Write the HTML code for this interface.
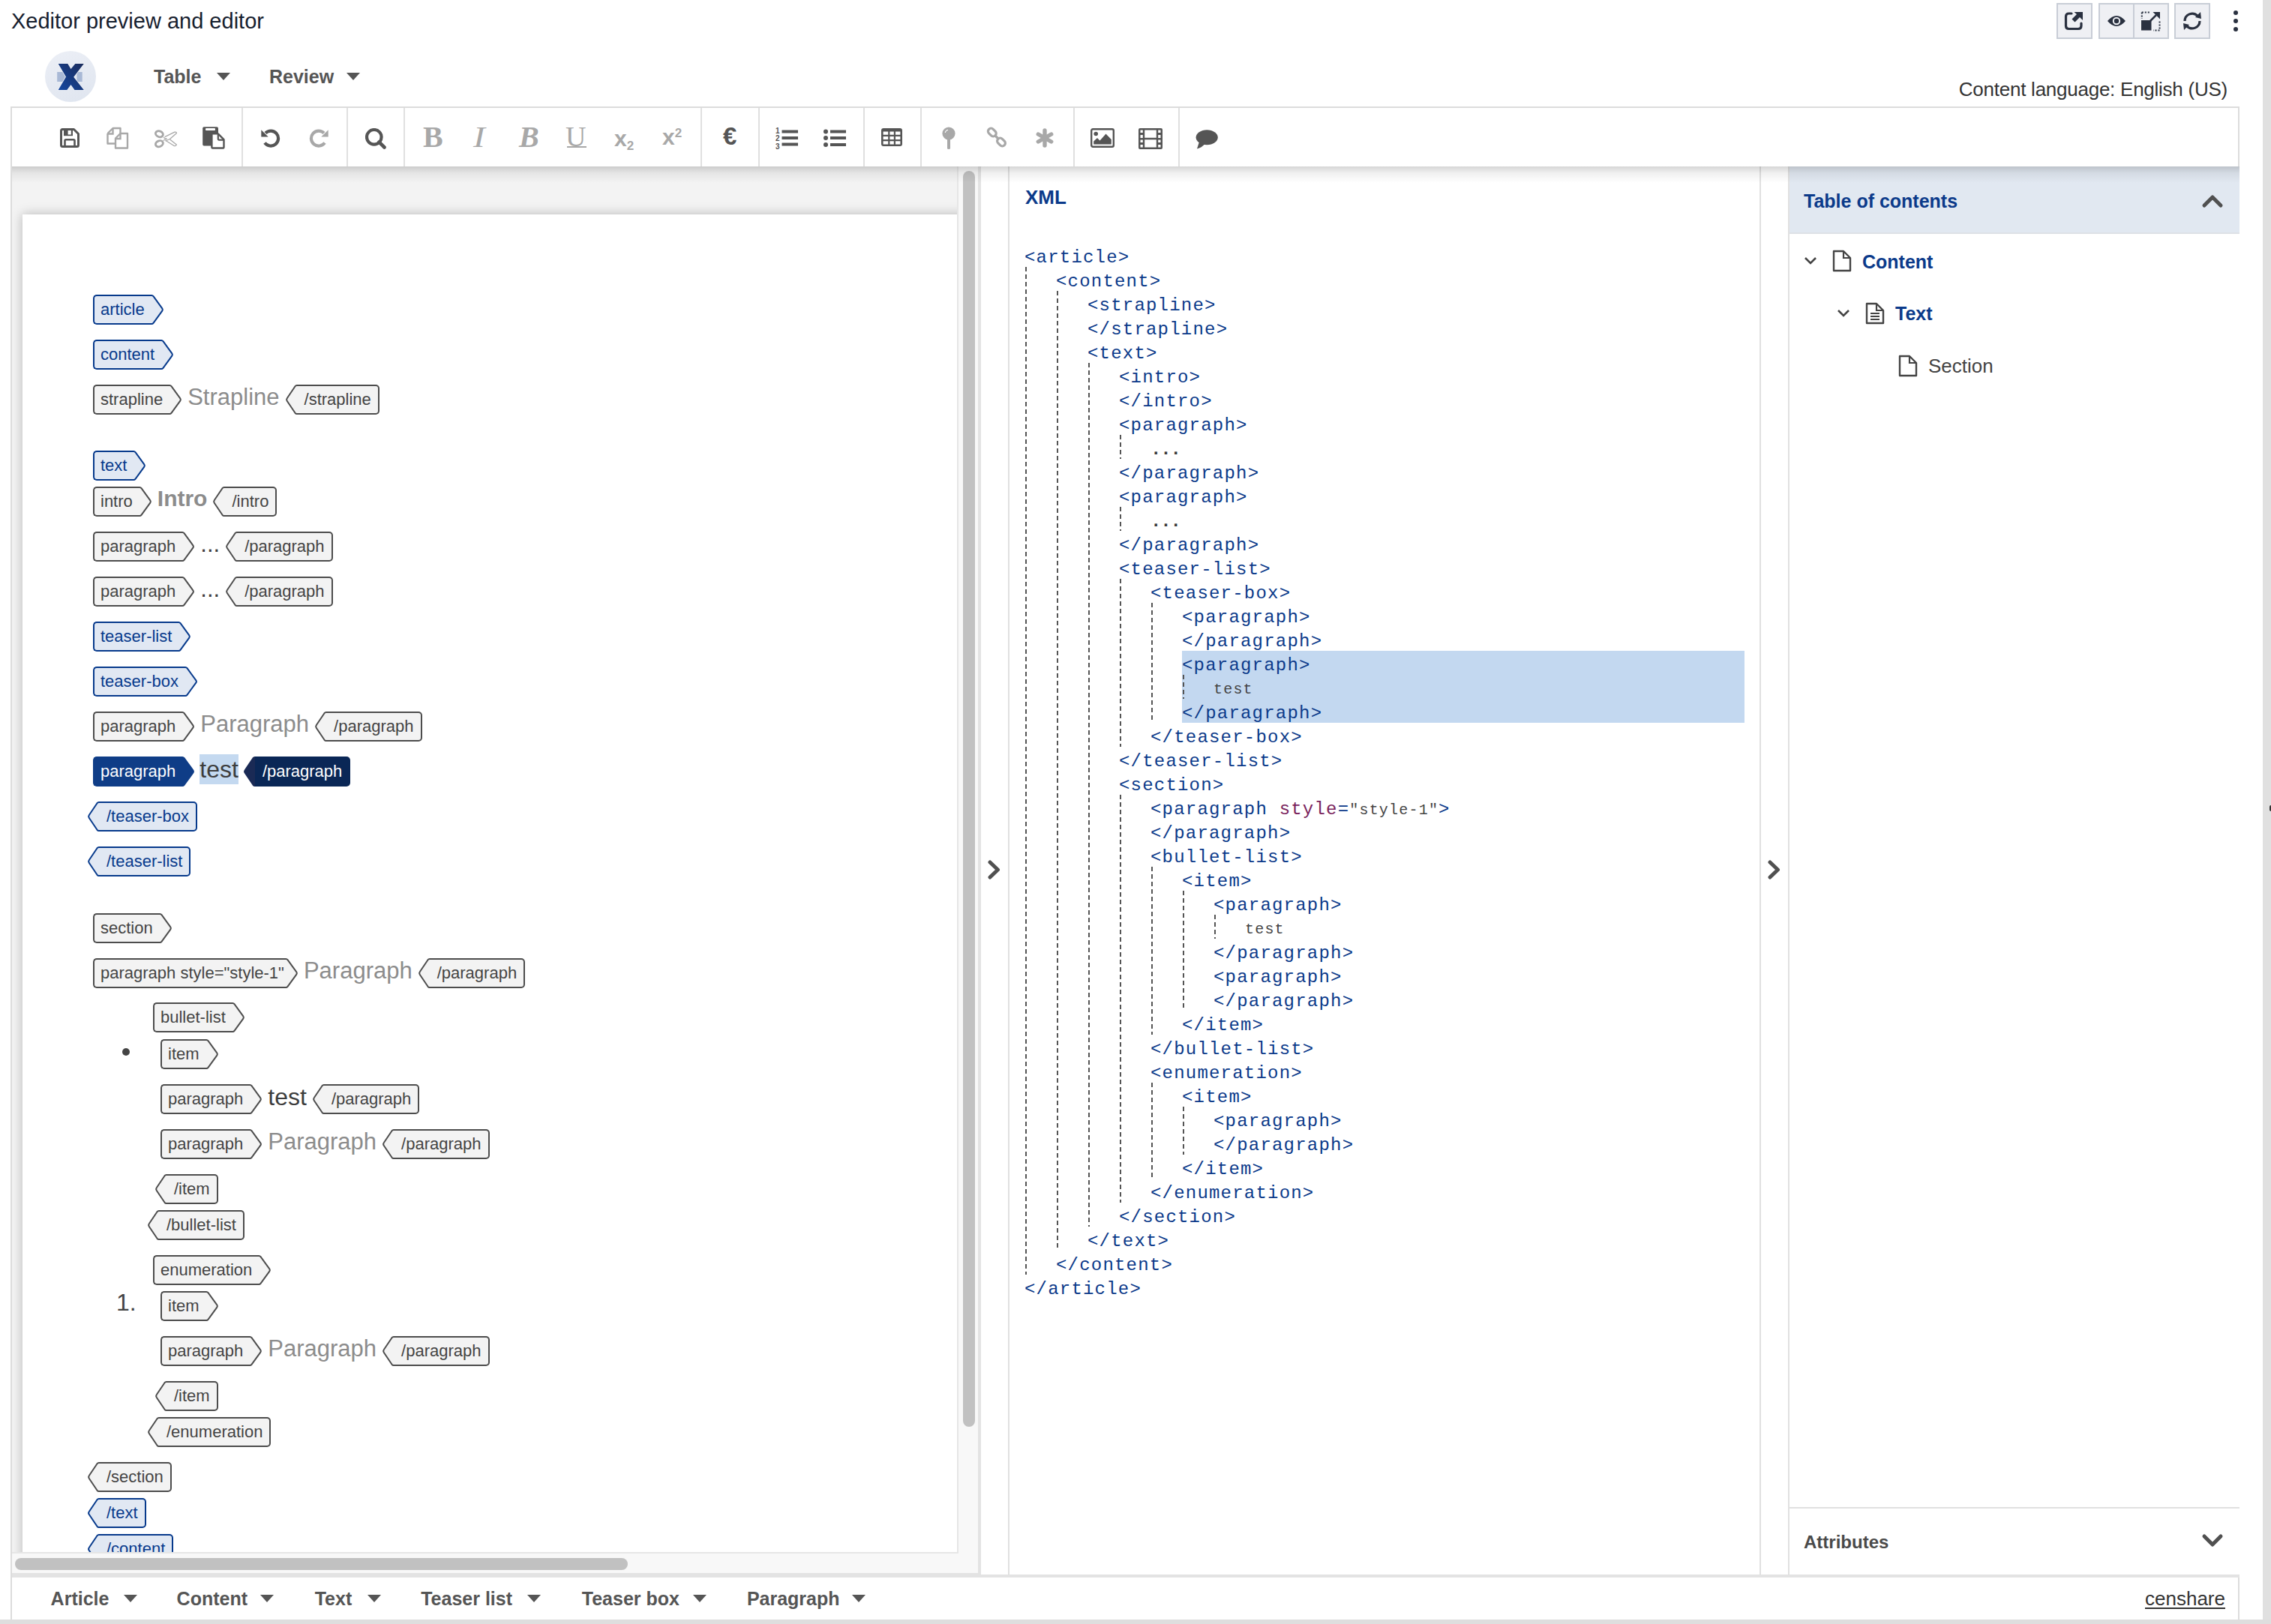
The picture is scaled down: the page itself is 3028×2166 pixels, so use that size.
<!DOCTYPE html><html><head><meta charset="utf-8"><style>
*{margin:0;padding:0;box-sizing:border-box}
html,body{width:3028px;height:2166px;overflow:hidden;background:#fff;font-family:"Liberation Sans",sans-serif}
.a{position:absolute}
.row{position:absolute;display:flex;align-items:flex-start;height:40px;white-space:nowrap}
.t{display:flex;height:40px;flex:none}
.t .r{height:40px;border:2px solid;font-size:22px;line-height:36px;}
.t.o .r{border-right:none;border-radius:5px 0 0 5px;padding:0 9px 0 8px}
.t.c .r{border-left:none;border-radius:0 5px 5px 0;padding:0 9px 0 10px}
.t svg{display:block;width:16px;height:40px;overflow:visible;flex:none}
.t.c svg{width:15px}
.g .r{border-color:#4d4d4d;background:#f3f3f3;color:#444}
.t svg .f{stroke:none}.t svg .k{fill:none!important;stroke-width:2;stroke-linejoin:round}
.g svg .f{fill:#f3f3f3}.g svg .k{stroke:#4d4d4d}
.b .r{border-color:#073a8c;background:#e1e8f3;color:#073a8c}
.b svg .f{fill:#e1e8f3}.b svg .k{stroke:#073a8c}
.s .r{border-color:#0f3d87;background:#0f3d87;color:#fff}
.s svg .f{fill:#0f3d87}.s svg .k{stroke:#0f3d87}
.sc .r{border-color:#0a2756;background:#0a2756;color:#fff}
.sc svg .f{fill:#1a2a55}.sc svg .k{stroke:#1a2a55}
.ct{font-size:31px;line-height:40px;color:#8c8c8c;margin:0 8px;position:relative;top:-3px}
.dk{color:#3d3d3d}
.xl{position:absolute;font-family:"Liberation Mono",monospace;font-size:24px;letter-spacing:1.2px;line-height:32px;color:#0b3a8a;white-space:pre}
.xt{font-size:20px;letter-spacing:1.2px;color:#444}
.dl{position:absolute;width:2px;background:repeating-linear-gradient(to bottom,#555 0 6px,transparent 6px 10px)}
</style></head><body>
<div class="a" style="left:15px;top:10px;font-size:29px;color:#16202e;line-height:36px">Xeditor preview and editor</div>
<div class="a" style="left:60px;top:68px;width:68px;height:68px;border-radius:50%;background:linear-gradient(160deg,#eceff6,#dfe5ef)"></div>
<svg class="a" style="left:74px;top:84px" width="40" height="38" viewBox="0 0 40 38">
<defs><linearGradient id="lg" x1="0" y1="1" x2="1" y2="0"><stop offset="0" stop-color="#1547a0"/><stop offset="1" stop-color="#1b2c5c"/></linearGradient></defs>
<path d="M2.2 12H14V25H2.2Z" fill="#a9b9d6"/><path d="M28.4 12H35.7V25H28.4Z" fill="#a9b9d6"/>
<path d="M3.7 1H16.3L20.5 8L26.3 1H37.8L24.2 18.7L37.8 36H25.5L20.5 29L15.3 36H3.7L14 18.5Z" fill="url(#lg)" stroke="#eef1f7" stroke-width="1.6" paint-order="stroke"/>
</svg>
<div class="a" style="left:205px;top:84px;font-size:25px;font-weight:bold;color:#555;line-height:36px">Table</div>
<svg class="a" style="left:289px;top:97px" width="18" height="10" viewBox="0 0 18 10"><path d="M0 0H18L9 10Z" fill="#555"/></svg>
<div class="a" style="left:359px;top:84px;font-size:25px;font-weight:bold;color:#555;line-height:36px">Review</div>
<svg class="a" style="left:462px;top:97px" width="18" height="10" viewBox="0 0 18 10"><path d="M0 0H18L9 10Z" fill="#555"/></svg>
<div class="a" style="right:58px;top:101px;font-size:26px;color:#333;line-height:36px;letter-spacing:-0.25px">Content language: English (US)</div>
<div class="a" style="left:2742px;top:4px;width:48px;height:48px;background:#eff0f4;border:2px solid #c8cdd6"></div>
<div class="a" style="left:2798px;top:4px;width:48px;height:48px;background:#eff0f4;border:2px solid #c8cdd6"></div>
<div class="a" style="left:2844px;top:4px;width:48px;height:48px;background:#eff0f4;border:2px solid #c8cdd6"></div>
<div class="a" style="left:2899px;top:4px;width:48px;height:48px;background:#eff0f4;border:2px solid #c8cdd6"></div>
<svg class="a" style="left:2752px;top:14px" width="28" height="28" viewBox="0 0 28 28">
<path d="M10 4H6.5Q2.5 4 2.5 8V20.5Q2.5 24.5 6.5 24.5H19Q23 24.5 23 20.5V17" fill="none" stroke="#2a3140" stroke-width="3.2" stroke-linecap="round"/>
<path d="M25 2V13L21 9L14.5 15.5L10.5 11.5L17 5L13.5 2Z" fill="#2a3140"/></svg>
<svg class="a" style="left:2808px;top:16px" width="28" height="24" viewBox="0 0 28 24">
<path d="M2 12Q14 -2 26 12Q14 26 2 12Z" fill="#2a3140"/><circle cx="14" cy="12" r="5.2" fill="#eff0f4"/><circle cx="14" cy="12" r="3.2" fill="#2a3140"/></svg>
<svg class="a" style="left:2854px;top:14px" width="28" height="28" viewBox="0 0 28 28">
<path d="M1 13H14.5V26.5H1Z" fill="#2a3140"/>
<path d="M1.8 2.6H13M1.8 2.6V11M25.5 14.5V26.5H17" fill="none" stroke="#2a3140" stroke-width="2" stroke-dasharray="2 2"/>
<path d="M13 14L21 6" stroke="#2a3140" stroke-width="2.5"/><path d="M16.5 2H26V11.5Z" fill="#2a3140"/></svg>
<svg class="a" style="left:2909px;top:14px" width="28" height="28" viewBox="0 0 28 28">
<path d="M4 14A10 10 0 0 1 21 7" fill="none" stroke="#2a3140" stroke-width="3.2"/><path d="M24 14A10 10 0 0 1 7 21" fill="none" stroke="#2a3140" stroke-width="3.2"/>
<path d="M18 9L25 2L26 11Z" fill="#2a3140"/><path d="M10 19L3 26L2 17Z" fill="#2a3140"/></svg>
<div class="a" style="left:2978px;top:14.3px;width:6px;height:6px;border-radius:50%;background:#2a3140"></div>
<div class="a" style="left:2978px;top:24.8px;width:6px;height:6px;border-radius:50%;background:#2a3140"></div>
<div class="a" style="left:2978px;top:35.5px;width:6px;height:6px;border-radius:50%;background:#2a3140"></div>
<div class="a" style="left:14px;top:142px;width:2972px;height:80px;border:2px solid #dcdcdc;border-bottom:none;background:#fff"></div>
<div class="a" style="left:14px;top:222px;width:2px;height:1940px;background:#dcdcdc"></div>
<div class="a" style="left:16px;top:222px;width:1260px;height:1848px;background:#f3f3f3;overflow:hidden"><div class="a" style="left:14px;top:64px;width:1400px;height:2000px;background:#fff;box-shadow:0 0 14px rgba(0,0,0,.25)"></div></div>
<div class="a" style="left:1276px;top:222px;width:28px;height:1850px;background:#f8f8f8;border-left:2px solid #e6e6e6"></div>
<div class="a" style="left:1276px;top:2072px;width:28px;height:26px;background:#f8f8f8"></div>
<div class="a" style="left:1284px;top:228px;width:16px;height:1675px;background:#c1c1c1;border-radius:8px"></div>
<div class="a" style="left:16px;top:2070px;width:1262px;height:28px;background:#f8f8f8;border-top:2px solid #e6e6e6"></div>
<div class="a" style="left:20px;top:2078px;width:817px;height:16px;background:#c1c1c1;border-radius:8px"></div>
<div class="a" style="left:1304px;top:222px;width:4px;height:1878px;background:#e3e3e3"></div>
<div class="a" style="left:16px;top:2098px;width:1292px;height:6px;background:#e3e3e3"></div>
<div class="a" style="left:1308px;top:2100px;width:1678px;height:4px;background:#e3e3e3"></div>
<div class="a" style="left:1344px;top:222px;width:2px;height:1878px;background:#e0e0e0"></div>
<div class="a" style="left:2346px;top:222px;width:2px;height:1878px;background:#e0e0e0"></div>
<div class="a" style="left:2384px;top:222px;width:2px;height:1878px;background:#e0e0e0"></div>
<svg class="a" style="left:1317px;top:1147px" width="17" height="26" viewBox="0 0 17 26"><path d="M3 3L13.5 13L3 23" fill="none" stroke="#505050" stroke-width="5" stroke-linejoin="round" stroke-linecap="round"/></svg>
<svg class="a" style="left:2357px;top:1147px" width="17" height="26" viewBox="0 0 17 26"><path d="M3 3L13.5 13L3 23" fill="none" stroke="#505050" stroke-width="5" stroke-linejoin="round" stroke-linecap="round"/></svg>
<div class="a" style="left:14px;top:2104px;width:2972px;height:58px;border:2px solid #dcdcdc;border-top:none;background:#fff"></div>
<div class="a" style="left:67.6px;top:2112px;font-size:25px;line-height:40px;font-weight:bold;color:#555">Article</div>
<svg class="a" style="left:164.7px;top:2127px" width="18" height="10" viewBox="0 0 18 10"><path d="M0 0H18L9 10Z" fill="#555"/></svg>
<div class="a" style="left:235.6px;top:2112px;font-size:25px;line-height:40px;font-weight:bold;color:#555">Content</div>
<svg class="a" style="left:347.4px;top:2127px" width="18" height="10" viewBox="0 0 18 10"><path d="M0 0H18L9 10Z" fill="#555"/></svg>
<div class="a" style="left:419.7px;top:2112px;font-size:25px;line-height:40px;font-weight:bold;color:#555">Text</div>
<svg class="a" style="left:490.3px;top:2127px" width="18" height="10" viewBox="0 0 18 10"><path d="M0 0H18L9 10Z" fill="#555"/></svg>
<div class="a" style="left:561.2px;top:2112px;font-size:25px;line-height:40px;font-weight:bold;color:#555">Teaser list</div>
<svg class="a" style="left:702.8px;top:2127px" width="18" height="10" viewBox="0 0 18 10"><path d="M0 0H18L9 10Z" fill="#555"/></svg>
<div class="a" style="left:775.8px;top:2112px;font-size:25px;line-height:40px;font-weight:bold;color:#555">Teaser box</div>
<svg class="a" style="left:923.7px;top:2127px" width="18" height="10" viewBox="0 0 18 10"><path d="M0 0H18L9 10Z" fill="#555"/></svg>
<div class="a" style="left:995.9px;top:2112px;font-size:25px;line-height:40px;font-weight:bold;color:#555">Paragraph</div>
<svg class="a" style="left:1135.7px;top:2127px" width="18" height="10" viewBox="0 0 18 10"><path d="M0 0H18L9 10Z" fill="#555"/></svg>
<div class="a" style="left:2860px;top:2112px;font-size:26px;line-height:40px;color:#333;text-decoration:underline;text-underline-offset:3px">censhare</div>
<div class="a" style="left:322px;top:144px;width:2px;height:78px;background:#e0e0e0"></div>
<div class="a" style="left:462px;top:144px;width:2px;height:78px;background:#e0e0e0"></div>
<div class="a" style="left:538px;top:144px;width:2px;height:78px;background:#e0e0e0"></div>
<div class="a" style="left:934px;top:144px;width:2px;height:78px;background:#e0e0e0"></div>
<div class="a" style="left:1011px;top:144px;width:2px;height:78px;background:#e0e0e0"></div>
<div class="a" style="left:1151px;top:144px;width:2px;height:78px;background:#e0e0e0"></div>
<div class="a" style="left:1227px;top:144px;width:2px;height:78px;background:#e0e0e0"></div>
<div class="a" style="left:1431px;top:144px;width:2px;height:78px;background:#e0e0e0"></div>
<div class="a" style="left:1571px;top:144px;width:2px;height:78px;background:#e0e0e0"></div>
<svg class="a" style="left:80px;top:171px" width="26" height="26" viewBox="0 0 26 26"><path d="M2.8 1.5H18.5L24.5 7.5V22.5Q24.5 24.5 22.5 24.5H3.5Q1.5 24.5 1.5 22.5V3.5Q1.5 1.5 3.5 1.5Z" fill="none" stroke="#555" stroke-width="3" stroke-linejoin="round"/>
<path d="M5 1.5H17V10.2H5Z" fill="#555"/><path d="M10.6 3H14.8V8.5H10.6Z" fill="#fff"/>
<path d="M6.5 24V16.5Q6.5 15.2 7.8 15.2H18.2Q19.5 15.2 19.5 16.5V24" fill="none" stroke="#555" stroke-width="2.6"/></svg>
<svg class="a" style="left:142px;top:169px" width="30" height="30" viewBox="0 0 30 30"><path d="M1.5 9L8.5 2H18.5V9" fill="none" stroke="#a8a8a8" stroke-width="2.4" stroke-linejoin="round"/>
<path d="M1.5 9V22.5H12" fill="none" stroke="#a8a8a8" stroke-width="2.4" stroke-linejoin="round"/>
<path d="M1.5 9.5H8.5V2" fill="none" stroke="#a8a8a8" stroke-width="2.4"/>
<path d="M12 15.5L18.5 9H28V28.5H12Z" fill="#fff" stroke="#a8a8a8" stroke-width="2.4" stroke-linejoin="round"/>
<path d="M12 16H18.5V9" fill="none" stroke="#a8a8a8" stroke-width="2.4"/></svg>
<svg class="a" style="left:206px;top:173px" width="30" height="25" viewBox="0 0 30 25"><ellipse cx="6.4" cy="5.7" rx="5.1" ry="3.9" transform="rotate(22 6.4 5.7)" fill="none" stroke="#a8a8a8" stroke-width="2.8"/>
<ellipse cx="6.4" cy="18.7" rx="5.1" ry="3.9" transform="rotate(-22 6.4 18.7)" fill="none" stroke="#a8a8a8" stroke-width="2.8"/>
<path d="M12 10.2L15 12.2L13.5 13.5L11.5 14.5" fill="none" stroke="#a8a8a8" stroke-width="1.3"/>
<path d="M13.6 9.6L26.8 3.2Q28.8 2.6 29.6 4.4L20.4 12.5L14.6 15" fill="none" stroke="#a8a8a8" stroke-width="1.3" stroke-linejoin="round"/>
<path d="M14.6 14.2L25.8 21.3Q28.2 22.2 29.4 20L20.6 12.9" fill="none" stroke="#a8a8a8" stroke-width="1.3" stroke-linejoin="round"/>
<circle cx="15.9" cy="12.2" r="1" fill="#a8a8a8"/></svg>
<svg class="a" style="left:270px;top:169px" width="30" height="30" viewBox="0 0 30 30"><path d="M2 0.2H19Q21 0.2 21 2.2V25.6H2Q0.2 25.6 0.2 23.6V2.2Q0.2 0.2 2 0.2Z" fill="#555"/>
<rect x="4" y="2" width="13" height="3" rx="1" fill="#fff"/>
<path d="M12.4 9.4H20.8L28.5 17.2V27.5Q28.5 28.5 27.5 28.5H13.4Q12.4 28.5 12.4 27.5Z" fill="#fff" stroke="#555" stroke-width="2.4" stroke-linejoin="round"/>
<path d="M20.8 9.6V16.6Q20.8 17.6 21.8 17.6H28.3" fill="none" stroke="#555" stroke-width="2.2"/></svg>
<svg class="a" style="left:348px;top:171px" width="26" height="26" viewBox="0 0 26 26"><g><path d="M5 19.5A10 10 0 1 0 6 6.5" fill="none" stroke="#555" stroke-width="4.2"/>
<path d="M0.3 2.2V11.5H9.7Z" fill="#555"/></g></svg>
<svg class="a" style="left:412px;top:171px" width="26" height="26" viewBox="0 0 26 26"><g transform="translate(26 0) scale(-1 1)"><path d="M5 19.5A10 10 0 1 0 6 6.5" fill="none" stroke="#a8a8a8" stroke-width="4.2"/>
<path d="M0.3 2.2V11.5H9.7Z" fill="#a8a8a8"/></g></svg>
<svg class="a" style="left:487px;top:171px" width="28" height="28" viewBox="0 0 28 28"><circle cx="11.8" cy="11.8" r="9.8" fill="none" stroke="#555" stroke-width="4.2"/>
<path d="M18.5 18.5L25.5 25.5" stroke="#555" stroke-width="4.6" stroke-linecap="round"/></svg>
<div class="a" style="left:564px;top:163px;font-family:'Liberation Serif',serif;font-size:40px;line-height:40px;color:#a8a8a8;font-weight:bold">B</div>
<div class="a" style="left:632px;top:162px;font-family:'Liberation Serif',serif;font-size:41px;line-height:41px;color:#a8a8a8;font-style:italic;transform:scaleX(1.15)">I</div>
<div class="a" style="left:692px;top:163px;font-family:'Liberation Serif',serif;font-size:40px;line-height:40px;color:#a8a8a8;font-weight:bold;font-style:italic">B</div>
<div class="a" style="left:754px;top:163px;font-family:'Liberation Serif',serif;font-size:38px;line-height:38px;color:#a8a8a8;">U</div>
<div class="a" style="left:756px;top:195px;width:26px;height:2.4px;background:#a8a8a8"></div>
<div class="a" style="left:819px;top:168px;font-family:'Liberation Sans';font-size:30px;line-height:34px;color:#a8a8a8;font-weight:bold">x<span style="font-size:17px;position:relative;top:5px">2</span></div>
<div class="a" style="left:883px;top:166px;font-family:'Liberation Sans';font-size:30px;line-height:34px;color:#a8a8a8;font-weight:bold">x<span style="font-size:17px;position:relative;top:-10px">2</span></div>
<div class="a" style="left:964px;top:164px;font-family:'Liberation Sans';font-size:33px;line-height:36px;color:#555;font-weight:bold">&#8364;</div>
<svg class="a" style="left:1034px;top:169px" width="30" height="31" viewBox="0 0 30 31"><path d="M8.5 4.5H30V8.5H8.5ZM8.5 13H30V17H8.5ZM8.5 21.5H30V25.5H8.5Z" fill="#555"/>
<text x="0" y="9" font-family="Liberation Sans" font-weight="bold" font-size="10" fill="#555">1</text>
<text x="0" y="19" font-family="Liberation Sans" font-weight="bold" font-size="10" fill="#555">2</text>
<text x="0" y="29.5" font-family="Liberation Sans" font-weight="bold" font-size="10" fill="#555">3</text></svg>
<svg class="a" style="left:1098px;top:171px" width="30" height="26" viewBox="0 0 30 26"><circle cx="3" cy="4.5" r="3" fill="#555"/><circle cx="3" cy="13" r="3" fill="#555"/><circle cx="3" cy="22" r="3" fill="#555"/>
<path d="M9 2.5H30V6.5H9ZM9 11H30V15H9ZM9 20H30V24H9Z" fill="#555"/></svg>
<svg class="a" style="left:1175px;top:171px" width="28" height="24" viewBox="0 0 28 24"><path d="M3 0H25Q28 0 28 3V21Q28 24 25 24H3Q0 24 0 21V3Q0 0 3 0ZM2.6 4.5V8.7H9.2V4.5ZM11.4 4.5V8.7H16.8V4.5ZM19 4.5V8.7H25.4V4.5ZM2.6 10.9V15.1H9.2V10.9ZM11.4 10.9V15.1H16.8V10.9ZM19 10.9V15.1H25.4V10.9ZM2.6 17.3V21.5H9.2V17.3ZM11.4 17.3V21.5H16.8V17.3ZM19 17.3V21.5H25.4V17.3Z" fill="#555" fill-rule="evenodd"/></svg>
<svg class="a" style="left:1256px;top:169px" width="18" height="30" viewBox="0 0 18 30"><circle cx="9" cy="9" r="8.6" fill="#a8a8a8"/><path d="M7 17H11V28.8Q11 30 9 30Q7 30 7 28.8Z" fill="#a8a8a8"/>
<path d="M4.2 8A4.8 4.8 0 0 1 8 4.2" fill="none" stroke="#fff" stroke-width="1.1"/></svg>
<svg class="a" style="left:1315px;top:169px" width="28" height="28" viewBox="0 0 28 28"><g fill="none" stroke="#a8a8a8" stroke-width="3.2">
<rect x="1.8" y="3.5" width="12" height="8" rx="4" transform="rotate(45 7.8 7.5)"/>
<rect x="14" y="16.5" width="12" height="8" rx="4" transform="rotate(45 20 20.5)"/>
<path d="M11.5 11.5L16.5 16.5"/></g></svg>
<svg class="a" style="left:1381px;top:171px" width="24" height="26" viewBox="0 0 24 26"><g stroke="#a8a8a8" stroke-width="5.4" stroke-linecap="round"><path d="M12 3V23"/><path d="M3.3 8L20.7 18"/><path d="M20.7 8L3.3 18"/></g></svg>
<svg class="a" style="left:1454px;top:171px" width="32" height="26" viewBox="0 0 32 26"><rect x="1.2" y="1.2" width="29.6" height="23.6" rx="2" fill="none" stroke="#555" stroke-width="2.4"/>
<circle cx="7.2" cy="7.5" r="2.8" fill="#555"/><path d="M4.2 21.5V17.5L9 13L12.5 16.5L20.5 7.5L27.8 15V21.5Z" fill="#555"/></svg>
<svg class="a" style="left:1518px;top:171px" width="32" height="28" viewBox="0 0 32 28"><path d="M2 0H30Q32 0 32 2V26Q32 28 30 28H2Q0 28 0 26V2Q0 0 2 0ZM2.5 2.5V6H5.8V2.5ZM2.5 9V13H5.8V9ZM2.5 15.5V19H5.8V15.5ZM2.5 22V25.5H5.8V22ZM26.2 2.5V6H29.5V2.5ZM26.2 9V13H29.5V9ZM26.2 15.5V19H29.5V15.5ZM26.2 22V25.5H29.5V22ZM8.2 2.5V12.8H23.8V2.5ZM8.2 15.2V25.5H23.8V15.2Z" fill="#555" fill-rule="evenodd"/></svg>
<svg class="a" style="left:1594px;top:173px" width="30" height="26" viewBox="0 0 30 26"><ellipse cx="15.2" cy="10.2" rx="14.6" ry="10" fill="#555"/><path d="M5 16L2 25.5Q8 24 12.5 19Z" fill="#555"/></svg>
<div class="a" style="left:1367px;top:248px;font-size:26px;font-weight:bold;color:#0b3a8a;line-height:30px">XML</div>
<div class="a" style="left:1576px;top:868px;width:750px;height:96px;background:#c3d8f0"></div>
<div class="dl" style="left:1493px;top:580px;height:32px"></div>
<div class="dl" style="left:1493px;top:676px;height:32px"></div>
<div class="dl" style="left:1577px;top:900px;height:32px"></div>
<div class="dl" style="left:1535px;top:804px;height:160px"></div>
<div class="dl" style="left:1493px;top:772px;height:224px"></div>
<div class="dl" style="left:1619px;top:1220px;height:32px"></div>
<div class="dl" style="left:1577px;top:1188px;height:160px"></div>
<div class="dl" style="left:1535px;top:1156px;height:224px"></div>
<div class="dl" style="left:1577px;top:1476px;height:64px"></div>
<div class="dl" style="left:1535px;top:1444px;height:128px"></div>
<div class="dl" style="left:1493px;top:1060px;height:544px"></div>
<div class="dl" style="left:1451px;top:484px;height:1152px"></div>
<div class="dl" style="left:1409px;top:388px;height:1280px"></div>
<div class="dl" style="left:1367px;top:356px;height:1344px"></div>
<div class="xl" style="left:1366px;top:328px">&lt;article&gt;</div>
<div class="xl" style="left:1408px;top:360px">&lt;content&gt;</div>
<div class="xl" style="left:1450px;top:392px">&lt;strapline&gt;</div>
<div class="xl" style="left:1450px;top:424px">&lt;/strapline&gt;</div>
<div class="xl" style="left:1450px;top:456px">&lt;text&gt;</div>
<div class="xl" style="left:1492px;top:488px">&lt;intro&gt;</div>
<div class="xl" style="left:1492px;top:520px">&lt;/intro&gt;</div>
<div class="xl" style="left:1492px;top:552px">&lt;paragraph&gt;</div>
<div class="xl xt" style="left:1534px;top:584px;font-weight:bold;font-size:24px;letter-spacing:-1.2px;color:#3a3a3a">...</div>
<div class="xl" style="left:1492px;top:616px">&lt;/paragraph&gt;</div>
<div class="xl" style="left:1492px;top:648px">&lt;paragraph&gt;</div>
<div class="xl xt" style="left:1534px;top:680px;font-weight:bold;font-size:24px;letter-spacing:-1.2px;color:#3a3a3a">...</div>
<div class="xl" style="left:1492px;top:712px">&lt;/paragraph&gt;</div>
<div class="xl" style="left:1492px;top:744px">&lt;teaser-list&gt;</div>
<div class="xl" style="left:1534px;top:776px">&lt;teaser-box&gt;</div>
<div class="xl" style="left:1576px;top:808px">&lt;paragraph&gt;</div>
<div class="xl" style="left:1576px;top:840px">&lt;/paragraph&gt;</div>
<div class="xl" style="left:1576px;top:872px">&lt;paragraph&gt;</div>
<div class="xl xt" style="left:1618px;top:904px;">test</div>
<div class="xl" style="left:1576px;top:936px">&lt;/paragraph&gt;</div>
<div class="xl" style="left:1534px;top:968px">&lt;/teaser-box&gt;</div>
<div class="xl" style="left:1492px;top:1000px">&lt;/teaser-list&gt;</div>
<div class="xl" style="left:1492px;top:1032px">&lt;section&gt;</div>
<div class="xl" style="left:1534px;top:1064px">&lt;paragraph <span style="color:#7a1f5c">style</span>=<span style="color:#444;font-size:20px;letter-spacing:1.2px">"style-1"</span>&gt;</div>
<div class="xl" style="left:1534px;top:1096px">&lt;/paragraph&gt;</div>
<div class="xl" style="left:1534px;top:1128px">&lt;bullet-list&gt;</div>
<div class="xl" style="left:1576px;top:1160px">&lt;item&gt;</div>
<div class="xl" style="left:1618px;top:1192px">&lt;paragraph&gt;</div>
<div class="xl xt" style="left:1660px;top:1224px;">test</div>
<div class="xl" style="left:1618px;top:1256px">&lt;/paragraph&gt;</div>
<div class="xl" style="left:1618px;top:1288px">&lt;paragraph&gt;</div>
<div class="xl" style="left:1618px;top:1320px">&lt;/paragraph&gt;</div>
<div class="xl" style="left:1576px;top:1352px">&lt;/item&gt;</div>
<div class="xl" style="left:1534px;top:1384px">&lt;/bullet-list&gt;</div>
<div class="xl" style="left:1534px;top:1416px">&lt;enumeration&gt;</div>
<div class="xl" style="left:1576px;top:1448px">&lt;item&gt;</div>
<div class="xl" style="left:1618px;top:1480px">&lt;paragraph&gt;</div>
<div class="xl" style="left:1618px;top:1512px">&lt;/paragraph&gt;</div>
<div class="xl" style="left:1576px;top:1544px">&lt;/item&gt;</div>
<div class="xl" style="left:1534px;top:1576px">&lt;/enumeration&gt;</div>
<div class="xl" style="left:1492px;top:1608px">&lt;/section&gt;</div>
<div class="xl" style="left:1450px;top:1640px">&lt;/text&gt;</div>
<div class="xl" style="left:1408px;top:1672px">&lt;/content&gt;</div>
<div class="xl" style="left:1366px;top:1704px">&lt;/article&gt;</div>
<div class="a" style="left:2386px;top:222px;width:600px;height:90px;background:#e1e8f1;border-bottom:2px solid #dde1e6"></div>
<div class="a" style="left:2405px;top:250px;font-size:25px;font-weight:bold;color:#0b3a8a;line-height:36px">Table of contents</div>
<svg class="a" style="left:2934px;top:257px" width="32" height="22" viewBox="0 0 32 22"><path d="M5 17L16 6L27 17" fill="none" stroke="#505050" stroke-width="5" stroke-linejoin="round" stroke-linecap="round"/></svg>
<svg class="a" style="left:2405px;top:342px" width="18" height="12" viewBox="0 0 18 12"><path d="M2 2L9 9L16 2" fill="none" stroke="#444" stroke-width="2.6"/></svg>
<svg class="a" style="left:2443px;top:333px" width="26" height="30" viewBox="0 0 26 30"><path d="M2 2H15L24 11V28H2Z" fill="none" stroke="#444" stroke-width="2.4" stroke-linejoin="round"/><path d="M15 2V11H24" fill="none" stroke="#444" stroke-width="2.2"/></svg>
<div class="a" style="left:2483px;top:333px;font-size:25px;font-weight:bold;color:#0b3a8a;line-height:32px">Content</div>
<svg class="a" style="left:2449px;top:412px" width="18" height="12" viewBox="0 0 18 12"><path d="M2 2L9 9L16 2" fill="none" stroke="#444" stroke-width="2.6"/></svg>
<svg class="a" style="left:2487px;top:403px" width="26" height="30" viewBox="0 0 26 30"><path d="M2 2H15L24 11V28H2Z" fill="none" stroke="#444" stroke-width="2.4" stroke-linejoin="round"/><path d="M15 2V11H24" fill="none" stroke="#444" stroke-width="2.2"/><path d="M7 15H19M7 19H19M7 23H19" stroke="#444" stroke-width="1.8"/></svg>
<div class="a" style="left:2527px;top:402px;font-size:25px;font-weight:bold;color:#0b3a8a;line-height:32px">Text</div>
<svg class="a" style="left:2531px;top:473px" width="26" height="30" viewBox="0 0 26 30"><path d="M2 2H15L24 11V28H2Z" fill="none" stroke="#444" stroke-width="2.4" stroke-linejoin="round"/><path d="M15 2V11H24" fill="none" stroke="#444" stroke-width="2.2"/></svg>
<div class="a" style="left:2571px;top:472px;font-size:26px;color:#444;line-height:32px">Section</div>
<div class="a" style="left:2386px;top:2010px;width:600px;height:2px;background:#e0e0e0"></div>
<div class="a" style="left:2405px;top:2039px;font-size:24px;font-weight:bold;color:#4a4a4a;line-height:36px">Attributes</div>
<svg class="a" style="left:2934px;top:2044px" width="32" height="22" viewBox="0 0 32 22"><path d="M5 5L16 16L27 5" fill="none" stroke="#505050" stroke-width="5" stroke-linejoin="round" stroke-linecap="round"/></svg>
<div class="row" style="top:393px;left:124px"><div class="t o b"><div class="r" style="">article</div><svg viewBox="0 0 16 40"><path class="f" d="M-1 1H0.2Q1.6 1 2.5 2.2L14.3 18.3Q15.5 20 14.3 21.7L2.5 37.8Q1.6 39 0.2 39H-1Z"/><path class="k" d="M-1 1H0.2Q1.6 1 2.5 2.2L14.3 18.3Q15.5 20 14.3 21.7L2.5 37.8Q1.6 39 0.2 39H-1"/></svg></div></div>
<div class="row" style="top:453px;left:124px"><div class="t o b"><div class="r" style="">content</div><svg viewBox="0 0 16 40"><path class="f" d="M-1 1H0.2Q1.6 1 2.5 2.2L14.3 18.3Q15.5 20 14.3 21.7L2.5 37.8Q1.6 39 0.2 39H-1Z"/><path class="k" d="M-1 1H0.2Q1.6 1 2.5 2.2L14.3 18.3Q15.5 20 14.3 21.7L2.5 37.8Q1.6 39 0.2 39H-1"/></svg></div></div>
<div class="row" style="top:513px;left:124px"><div class="t o g"><div class="r" style="">strapline</div><svg viewBox="0 0 16 40"><path class="f" d="M-1 1H0.2Q1.6 1 2.5 2.2L14.3 18.3Q15.5 20 14.3 21.7L2.5 37.8Q1.6 39 0.2 39H-1Z"/><path class="k" d="M-1 1H0.2Q1.6 1 2.5 2.2L14.3 18.3Q15.5 20 14.3 21.7L2.5 37.8Q1.6 39 0.2 39H-1"/></svg></div><span class="ct">Strapline</span><div class="t c g"><svg viewBox="0 0 15 40"><path class="f" d="M16 1H14.8Q13.4 1 12.5 2.2L1.7 18.3Q0.5 20 1.7 21.7L12.5 37.8Q13.4 39 14.8 39H16Z"/><path class="k" d="M16 1H14.8Q13.4 1 12.5 2.2L1.7 18.3Q0.5 20 1.7 21.7L12.5 37.8Q13.4 39 14.8 39H16"/></svg><div class="r">/strapline</div></div></div>
<div class="row" style="top:601px;left:124px"><div class="t o b"><div class="r" style="">text</div><svg viewBox="0 0 16 40"><path class="f" d="M-1 1H0.2Q1.6 1 2.5 2.2L14.3 18.3Q15.5 20 14.3 21.7L2.5 37.8Q1.6 39 0.2 39H-1Z"/><path class="k" d="M-1 1H0.2Q1.6 1 2.5 2.2L14.3 18.3Q15.5 20 14.3 21.7L2.5 37.8Q1.6 39 0.2 39H-1"/></svg></div></div>
<div class="row" style="top:649px;left:124px"><div class="t o g"><div class="r" style="">intro</div><svg viewBox="0 0 16 40"><path class="f" d="M-1 1H0.2Q1.6 1 2.5 2.2L14.3 18.3Q15.5 20 14.3 21.7L2.5 37.8Q1.6 39 0.2 39H-1Z"/><path class="k" d="M-1 1H0.2Q1.6 1 2.5 2.2L14.3 18.3Q15.5 20 14.3 21.7L2.5 37.8Q1.6 39 0.2 39H-1"/></svg></div><span class="ct" style="font-weight:bold;font-size:30px;top:-4px">Intro</span><div class="t c g"><svg viewBox="0 0 15 40"><path class="f" d="M16 1H14.8Q13.4 1 12.5 2.2L1.7 18.3Q0.5 20 1.7 21.7L12.5 37.8Q13.4 39 14.8 39H16Z"/><path class="k" d="M16 1H14.8Q13.4 1 12.5 2.2L1.7 18.3Q0.5 20 1.7 21.7L12.5 37.8Q13.4 39 14.8 39H16"/></svg><div class="r">/intro</div></div></div>
<div class="row" style="top:709px;left:124px"><div class="t o g"><div class="r" style="">paragraph</div><svg viewBox="0 0 16 40"><path class="f" d="M-1 1H0.2Q1.6 1 2.5 2.2L14.3 18.3Q15.5 20 14.3 21.7L2.5 37.8Q1.6 39 0.2 39H-1Z"/><path class="k" d="M-1 1H0.2Q1.6 1 2.5 2.2L14.3 18.3Q15.5 20 14.3 21.7L2.5 37.8Q1.6 39 0.2 39H-1"/></svg></div><span class="ct dk">...</span><div class="t c g"><svg viewBox="0 0 15 40"><path class="f" d="M16 1H14.8Q13.4 1 12.5 2.2L1.7 18.3Q0.5 20 1.7 21.7L12.5 37.8Q13.4 39 14.8 39H16Z"/><path class="k" d="M16 1H14.8Q13.4 1 12.5 2.2L1.7 18.3Q0.5 20 1.7 21.7L12.5 37.8Q13.4 39 14.8 39H16"/></svg><div class="r">/paragraph</div></div></div>
<div class="row" style="top:769px;left:124px"><div class="t o g"><div class="r" style="">paragraph</div><svg viewBox="0 0 16 40"><path class="f" d="M-1 1H0.2Q1.6 1 2.5 2.2L14.3 18.3Q15.5 20 14.3 21.7L2.5 37.8Q1.6 39 0.2 39H-1Z"/><path class="k" d="M-1 1H0.2Q1.6 1 2.5 2.2L14.3 18.3Q15.5 20 14.3 21.7L2.5 37.8Q1.6 39 0.2 39H-1"/></svg></div><span class="ct dk">...</span><div class="t c g"><svg viewBox="0 0 15 40"><path class="f" d="M16 1H14.8Q13.4 1 12.5 2.2L1.7 18.3Q0.5 20 1.7 21.7L12.5 37.8Q13.4 39 14.8 39H16Z"/><path class="k" d="M16 1H14.8Q13.4 1 12.5 2.2L1.7 18.3Q0.5 20 1.7 21.7L12.5 37.8Q13.4 39 14.8 39H16"/></svg><div class="r">/paragraph</div></div></div>
<div class="row" style="top:829px;left:124px"><div class="t o b"><div class="r" style="">teaser-list</div><svg viewBox="0 0 16 40"><path class="f" d="M-1 1H0.2Q1.6 1 2.5 2.2L14.3 18.3Q15.5 20 14.3 21.7L2.5 37.8Q1.6 39 0.2 39H-1Z"/><path class="k" d="M-1 1H0.2Q1.6 1 2.5 2.2L14.3 18.3Q15.5 20 14.3 21.7L2.5 37.8Q1.6 39 0.2 39H-1"/></svg></div></div>
<div class="row" style="top:889px;left:124px"><div class="t o b"><div class="r" style="">teaser-box</div><svg viewBox="0 0 16 40"><path class="f" d="M-1 1H0.2Q1.6 1 2.5 2.2L14.3 18.3Q15.5 20 14.3 21.7L2.5 37.8Q1.6 39 0.2 39H-1Z"/><path class="k" d="M-1 1H0.2Q1.6 1 2.5 2.2L14.3 18.3Q15.5 20 14.3 21.7L2.5 37.8Q1.6 39 0.2 39H-1"/></svg></div></div>
<div class="row" style="top:949px;left:124px"><div class="t o g"><div class="r" style="">paragraph</div><svg viewBox="0 0 16 40"><path class="f" d="M-1 1H0.2Q1.6 1 2.5 2.2L14.3 18.3Q15.5 20 14.3 21.7L2.5 37.8Q1.6 39 0.2 39H-1Z"/><path class="k" d="M-1 1H0.2Q1.6 1 2.5 2.2L14.3 18.3Q15.5 20 14.3 21.7L2.5 37.8Q1.6 39 0.2 39H-1"/></svg></div><span class="ct">Paragraph</span><div class="t c g"><svg viewBox="0 0 15 40"><path class="f" d="M16 1H14.8Q13.4 1 12.5 2.2L1.7 18.3Q0.5 20 1.7 21.7L12.5 37.8Q13.4 39 14.8 39H16Z"/><path class="k" d="M16 1H14.8Q13.4 1 12.5 2.2L1.7 18.3Q0.5 20 1.7 21.7L12.5 37.8Q13.4 39 14.8 39H16"/></svg><div class="r">/paragraph</div></div></div>
<div class="row" style="top:1009px;left:124px"><div class="t o s"><div class="r" style="">paragraph</div><svg viewBox="0 0 16 40"><path class="f" d="M-1 1H0.2Q1.6 1 2.5 2.2L14.3 18.3Q15.5 20 14.3 21.7L2.5 37.8Q1.6 39 0.2 39H-1Z"/><path class="k" d="M-1 1H0.2Q1.6 1 2.5 2.2L14.3 18.3Q15.5 20 14.3 21.7L2.5 37.8Q1.6 39 0.2 39H-1"/></svg></div><span class="ct dk" style="background:#c4d9f0;margin:0 7px;font-size:32px">test</span><div class="t c sc"><svg viewBox="0 0 15 40"><path class="f" d="M16 1H14.8Q13.4 1 12.5 2.2L1.7 18.3Q0.5 20 1.7 21.7L12.5 37.8Q13.4 39 14.8 39H16Z"/><path class="k" d="M16 1H14.8Q13.4 1 12.5 2.2L1.7 18.3Q0.5 20 1.7 21.7L12.5 37.8Q13.4 39 14.8 39H16"/></svg><div class="r">/paragraph</div></div></div>
<div class="row" style="top:1069px;left:117px"><div class="t c b"><svg viewBox="0 0 15 40"><path class="f" d="M16 1H14.8Q13.4 1 12.5 2.2L1.7 18.3Q0.5 20 1.7 21.7L12.5 37.8Q13.4 39 14.8 39H16Z"/><path class="k" d="M16 1H14.8Q13.4 1 12.5 2.2L1.7 18.3Q0.5 20 1.7 21.7L12.5 37.8Q13.4 39 14.8 39H16"/></svg><div class="r">/teaser-box</div></div></div>
<div class="row" style="top:1129px;left:117px"><div class="t c b"><svg viewBox="0 0 15 40"><path class="f" d="M16 1H14.8Q13.4 1 12.5 2.2L1.7 18.3Q0.5 20 1.7 21.7L12.5 37.8Q13.4 39 14.8 39H16Z"/><path class="k" d="M16 1H14.8Q13.4 1 12.5 2.2L1.7 18.3Q0.5 20 1.7 21.7L12.5 37.8Q13.4 39 14.8 39H16"/></svg><div class="r">/teaser-list</div></div></div>
<div class="row" style="top:1218px;left:124px"><div class="t o g"><div class="r" style="">section</div><svg viewBox="0 0 16 40"><path class="f" d="M-1 1H0.2Q1.6 1 2.5 2.2L14.3 18.3Q15.5 20 14.3 21.7L2.5 37.8Q1.6 39 0.2 39H-1Z"/><path class="k" d="M-1 1H0.2Q1.6 1 2.5 2.2L14.3 18.3Q15.5 20 14.3 21.7L2.5 37.8Q1.6 39 0.2 39H-1"/></svg></div></div>
<div class="row" style="top:1278px;left:124px"><div class="t o g"><div class="r" style="padding-right:2px">paragraph style=&quot;style-1&quot;</div><svg viewBox="0 0 16 40"><path class="f" d="M-1 1H0.2Q1.6 1 2.5 2.2L14.3 18.3Q15.5 20 14.3 21.7L2.5 37.8Q1.6 39 0.2 39H-1Z"/><path class="k" d="M-1 1H0.2Q1.6 1 2.5 2.2L14.3 18.3Q15.5 20 14.3 21.7L2.5 37.8Q1.6 39 0.2 39H-1"/></svg></div><span class="ct">Paragraph</span><div class="t c g"><svg viewBox="0 0 15 40"><path class="f" d="M16 1H14.8Q13.4 1 12.5 2.2L1.7 18.3Q0.5 20 1.7 21.7L12.5 37.8Q13.4 39 14.8 39H16Z"/><path class="k" d="M16 1H14.8Q13.4 1 12.5 2.2L1.7 18.3Q0.5 20 1.7 21.7L12.5 37.8Q13.4 39 14.8 39H16"/></svg><div class="r">/paragraph</div></div></div>
<div class="row" style="top:1337px;left:204px"><div class="t o g"><div class="r" style="">bullet-list</div><svg viewBox="0 0 16 40"><path class="f" d="M-1 1H0.2Q1.6 1 2.5 2.2L14.3 18.3Q15.5 20 14.3 21.7L2.5 37.8Q1.6 39 0.2 39H-1Z"/><path class="k" d="M-1 1H0.2Q1.6 1 2.5 2.2L14.3 18.3Q15.5 20 14.3 21.7L2.5 37.8Q1.6 39 0.2 39H-1"/></svg></div></div>
<div class="a" style="left:163px;top:1398px;width:10px;height:10px;border-radius:50%;background:#444"></div>
<div class="row" style="top:1386px;left:214px"><div class="t o g"><div class="r" style="">item</div><svg viewBox="0 0 16 40"><path class="f" d="M-1 1H0.2Q1.6 1 2.5 2.2L14.3 18.3Q15.5 20 14.3 21.7L2.5 37.8Q1.6 39 0.2 39H-1Z"/><path class="k" d="M-1 1H0.2Q1.6 1 2.5 2.2L14.3 18.3Q15.5 20 14.3 21.7L2.5 37.8Q1.6 39 0.2 39H-1"/></svg></div></div>
<div class="row" style="top:1446px;left:214px"><div class="t o g"><div class="r" style="">paragraph</div><svg viewBox="0 0 16 40"><path class="f" d="M-1 1H0.2Q1.6 1 2.5 2.2L14.3 18.3Q15.5 20 14.3 21.7L2.5 37.8Q1.6 39 0.2 39H-1Z"/><path class="k" d="M-1 1H0.2Q1.6 1 2.5 2.2L14.3 18.3Q15.5 20 14.3 21.7L2.5 37.8Q1.6 39 0.2 39H-1"/></svg></div><span class="ct dk" style="font-size:32px">test</span><div class="t c g"><svg viewBox="0 0 15 40"><path class="f" d="M16 1H14.8Q13.4 1 12.5 2.2L1.7 18.3Q0.5 20 1.7 21.7L12.5 37.8Q13.4 39 14.8 39H16Z"/><path class="k" d="M16 1H14.8Q13.4 1 12.5 2.2L1.7 18.3Q0.5 20 1.7 21.7L12.5 37.8Q13.4 39 14.8 39H16"/></svg><div class="r">/paragraph</div></div></div>
<div class="row" style="top:1506px;left:214px"><div class="t o g"><div class="r" style="">paragraph</div><svg viewBox="0 0 16 40"><path class="f" d="M-1 1H0.2Q1.6 1 2.5 2.2L14.3 18.3Q15.5 20 14.3 21.7L2.5 37.8Q1.6 39 0.2 39H-1Z"/><path class="k" d="M-1 1H0.2Q1.6 1 2.5 2.2L14.3 18.3Q15.5 20 14.3 21.7L2.5 37.8Q1.6 39 0.2 39H-1"/></svg></div><span class="ct">Paragraph</span><div class="t c g"><svg viewBox="0 0 15 40"><path class="f" d="M16 1H14.8Q13.4 1 12.5 2.2L1.7 18.3Q0.5 20 1.7 21.7L12.5 37.8Q13.4 39 14.8 39H16Z"/><path class="k" d="M16 1H14.8Q13.4 1 12.5 2.2L1.7 18.3Q0.5 20 1.7 21.7L12.5 37.8Q13.4 39 14.8 39H16"/></svg><div class="r">/paragraph</div></div></div>
<div class="row" style="top:1566px;left:207px"><div class="t c g"><svg viewBox="0 0 15 40"><path class="f" d="M16 1H14.8Q13.4 1 12.5 2.2L1.7 18.3Q0.5 20 1.7 21.7L12.5 37.8Q13.4 39 14.8 39H16Z"/><path class="k" d="M16 1H14.8Q13.4 1 12.5 2.2L1.7 18.3Q0.5 20 1.7 21.7L12.5 37.8Q13.4 39 14.8 39H16"/></svg><div class="r">/item</div></div></div>
<div class="row" style="top:1614px;left:197px"><div class="t c g"><svg viewBox="0 0 15 40"><path class="f" d="M16 1H14.8Q13.4 1 12.5 2.2L1.7 18.3Q0.5 20 1.7 21.7L12.5 37.8Q13.4 39 14.8 39H16Z"/><path class="k" d="M16 1H14.8Q13.4 1 12.5 2.2L1.7 18.3Q0.5 20 1.7 21.7L12.5 37.8Q13.4 39 14.8 39H16"/></svg><div class="r">/bullet-list</div></div></div>
<div class="row" style="top:1674px;left:204px"><div class="t o g"><div class="r" style="">enumeration</div><svg viewBox="0 0 16 40"><path class="f" d="M-1 1H0.2Q1.6 1 2.5 2.2L14.3 18.3Q15.5 20 14.3 21.7L2.5 37.8Q1.6 39 0.2 39H-1Z"/><path class="k" d="M-1 1H0.2Q1.6 1 2.5 2.2L14.3 18.3Q15.5 20 14.3 21.7L2.5 37.8Q1.6 39 0.2 39H-1"/></svg></div></div>
<div class="a" style="left:155px;top:1717px;font-size:32px;line-height:40px;color:#444">1.</div>
<div class="row" style="top:1722px;left:214px"><div class="t o g"><div class="r" style="">item</div><svg viewBox="0 0 16 40"><path class="f" d="M-1 1H0.2Q1.6 1 2.5 2.2L14.3 18.3Q15.5 20 14.3 21.7L2.5 37.8Q1.6 39 0.2 39H-1Z"/><path class="k" d="M-1 1H0.2Q1.6 1 2.5 2.2L14.3 18.3Q15.5 20 14.3 21.7L2.5 37.8Q1.6 39 0.2 39H-1"/></svg></div></div>
<div class="row" style="top:1782px;left:214px"><div class="t o g"><div class="r" style="">paragraph</div><svg viewBox="0 0 16 40"><path class="f" d="M-1 1H0.2Q1.6 1 2.5 2.2L14.3 18.3Q15.5 20 14.3 21.7L2.5 37.8Q1.6 39 0.2 39H-1Z"/><path class="k" d="M-1 1H0.2Q1.6 1 2.5 2.2L14.3 18.3Q15.5 20 14.3 21.7L2.5 37.8Q1.6 39 0.2 39H-1"/></svg></div><span class="ct">Paragraph</span><div class="t c g"><svg viewBox="0 0 15 40"><path class="f" d="M16 1H14.8Q13.4 1 12.5 2.2L1.7 18.3Q0.5 20 1.7 21.7L12.5 37.8Q13.4 39 14.8 39H16Z"/><path class="k" d="M16 1H14.8Q13.4 1 12.5 2.2L1.7 18.3Q0.5 20 1.7 21.7L12.5 37.8Q13.4 39 14.8 39H16"/></svg><div class="r">/paragraph</div></div></div>
<div class="row" style="top:1842px;left:207px"><div class="t c g"><svg viewBox="0 0 15 40"><path class="f" d="M16 1H14.8Q13.4 1 12.5 2.2L1.7 18.3Q0.5 20 1.7 21.7L12.5 37.8Q13.4 39 14.8 39H16Z"/><path class="k" d="M16 1H14.8Q13.4 1 12.5 2.2L1.7 18.3Q0.5 20 1.7 21.7L12.5 37.8Q13.4 39 14.8 39H16"/></svg><div class="r">/item</div></div></div>
<div class="row" style="top:1890px;left:197px"><div class="t c g"><svg viewBox="0 0 15 40"><path class="f" d="M16 1H14.8Q13.4 1 12.5 2.2L1.7 18.3Q0.5 20 1.7 21.7L12.5 37.8Q13.4 39 14.8 39H16Z"/><path class="k" d="M16 1H14.8Q13.4 1 12.5 2.2L1.7 18.3Q0.5 20 1.7 21.7L12.5 37.8Q13.4 39 14.8 39H16"/></svg><div class="r">/enumeration</div></div></div>
<div class="row" style="top:1950px;left:117px"><div class="t c g"><svg viewBox="0 0 15 40"><path class="f" d="M16 1H14.8Q13.4 1 12.5 2.2L1.7 18.3Q0.5 20 1.7 21.7L12.5 37.8Q13.4 39 14.8 39H16Z"/><path class="k" d="M16 1H14.8Q13.4 1 12.5 2.2L1.7 18.3Q0.5 20 1.7 21.7L12.5 37.8Q13.4 39 14.8 39H16"/></svg><div class="r">/section</div></div></div>
<div class="row" style="top:1998px;left:117px"><div class="t c b"><svg viewBox="0 0 15 40"><path class="f" d="M16 1H14.8Q13.4 1 12.5 2.2L1.7 18.3Q0.5 20 1.7 21.7L12.5 37.8Q13.4 39 14.8 39H16Z"/><path class="k" d="M16 1H14.8Q13.4 1 12.5 2.2L1.7 18.3Q0.5 20 1.7 21.7L12.5 37.8Q13.4 39 14.8 39H16"/></svg><div class="r">/text</div></div></div>
<div class="a" style="left:0;top:2046px;width:1276px;height:24px;overflow:hidden">
<div class="row" style="top:0;left:117px"><div class="t c b"><svg viewBox="0 0 15 40"><path class="f" d="M16 1H14.8Q13.4 1 12.5 2.2L1.7 18.3Q0.5 20 1.7 21.7L12.5 37.8Q13.4 39 14.8 39H16Z"/><path class="k" d="M16 1H14.8Q13.4 1 12.5 2.2L1.7 18.3Q0.5 20 1.7 21.7L12.5 37.8Q13.4 39 14.8 39H16"/></svg><div class="r">/content</div></div></div></div>
<div class="a" style="left:3017px;top:0;width:11px;height:2166px;background:#e0e0e0"></div>
<div class="a" style="left:0;top:2160px;width:3028px;height:6px;background:#dedede"></div>
<div class="a" style="left:3026px;top:1074px;width:2px;height:8px;border-radius:2px 0 0 2px;background:#333"></div>
<div class="a" style="left:16px;top:222px;width:2970px;height:22px;background:linear-gradient(to bottom,rgba(0,0,0,.16),rgba(0,0,0,.06) 40%,rgba(0,0,0,0))"></div>
</body></html>
